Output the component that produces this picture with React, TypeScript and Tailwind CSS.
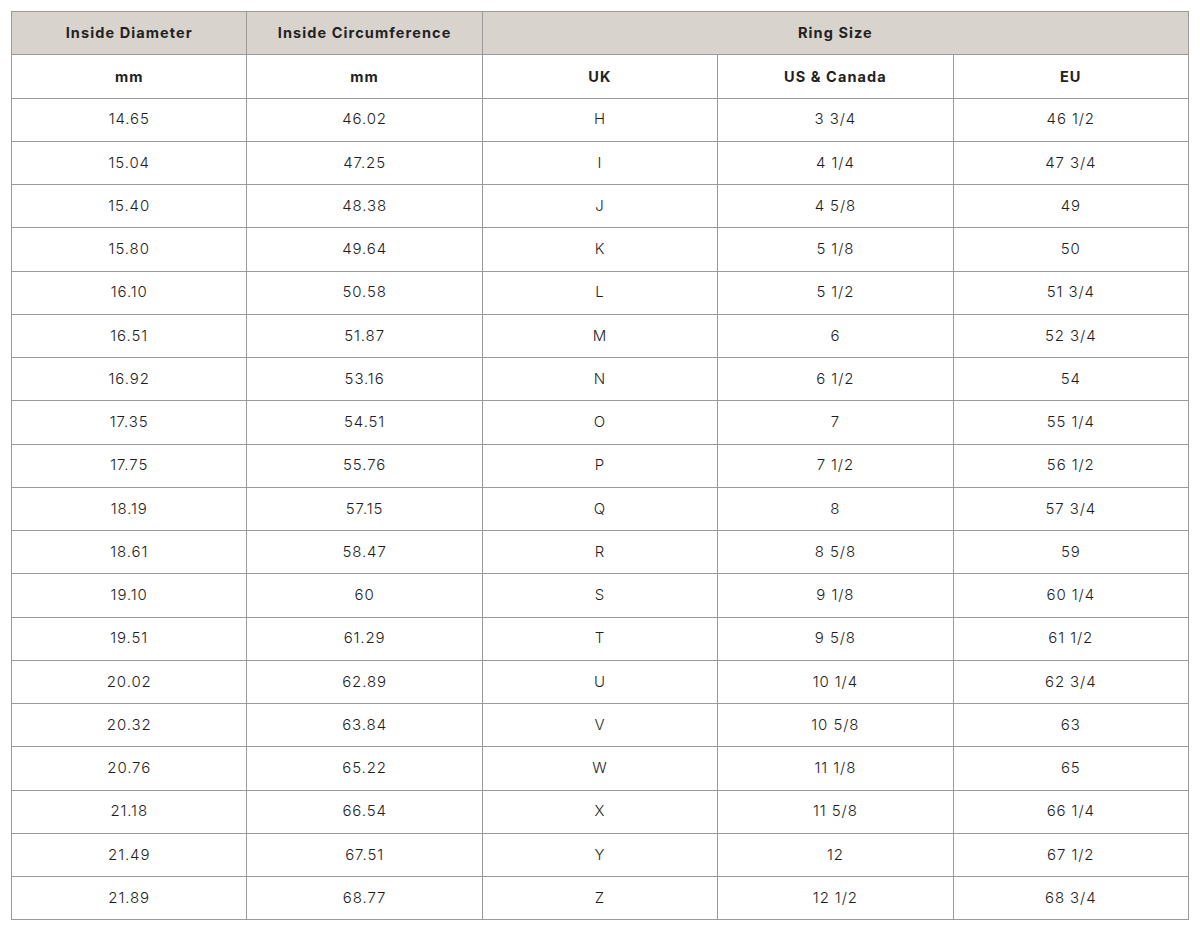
import React from "react";

const rows: string[][] = [
  ["14.65", "46.02", "H", "3 3/4", "46 1/2"],
  ["15.04", "47.25", "I", "4 1/4", "47 3/4"],
  ["15.40", "48.38", "J", "4 5/8", "49"],
  ["15.80", "49.64", "K", "5 1/8", "50"],
  ["16.10", "50.58", "L", "5 1/2", "51 3/4"],
  ["16.51", "51.87", "M", "6", "52 3/4"],
  ["16.92", "53.16", "N", "6 1/2", "54"],
  ["17.35", "54.51", "O", "7", "55 1/4"],
  ["17.75", "55.76", "P", "7 1/2", "56 1/2"],
  ["18.19", "57.15", "Q", "8", "57 3/4"],
  ["18.61", "58.47", "R", "8 5/8", "59"],
  ["19.10", "60", "S", "9 1/8", "60 1/4"],
  ["19.51", "61.29", "T", "9 5/8", "61 1/2"],
  ["20.02", "62.89", "U", "10 1/4", "62 3/4"],
  ["20.32", "63.84", "V", "10 5/8", "63"],
  ["20.76", "65.22", "W", "11 1/8", "65"],
  ["21.18", "66.54", "X", "11 5/8", "66 1/4"],
  ["21.49", "67.51", "Y", "12", "67 1/2"],
  ["21.89", "68.77", "Z", "12 1/2", "68 3/4"],
];

const cell = "border border-[#9a9a9a] text-center align-middle";

const App = () => {
  return (
    <div className="bg-white w-[1200px] h-[930px] pt-[11px] pl-[11px] font-['Inter',sans-serif] text-[#222]">
      <table className="w-[1178px] table-fixed border-collapse">
        <thead>
          <tr className="h-[43.25px] bg-[#d8d3cd] font-semibold text-[14.5px] tracking-[0.075em]">
            <th className={cell}>Inside Diameter</th>
            <th className={cell}>Inside Circumference</th>
            <th className={cell} colSpan={3}>
              Ring Size
            </th>
          </tr>
          <tr className="h-[43.25px] font-semibold text-[14.5px] tracking-[0.075em]">
            <th className={cell}>mm</th>
            <th className={cell}>mm</th>
            <th className={cell}>UK</th>
            <th className={cell}>US &amp; Canada</th>
            <th className={cell}>EU</th>
          </tr>
        </thead>
        <tbody className="text-[15px] font-light tracking-[0.06em] text-[#1e1e1e]">
          {rows.map((row) => (
            <tr className="h-[43.25px]" key={row[0]}>
              {row.map((v, i) => (
                <td className={cell} key={i}>
                  {v}
                </td>
              ))}
            </tr>
          ))}
        </tbody>
      </table>
    </div>
  );
};

export default App;
